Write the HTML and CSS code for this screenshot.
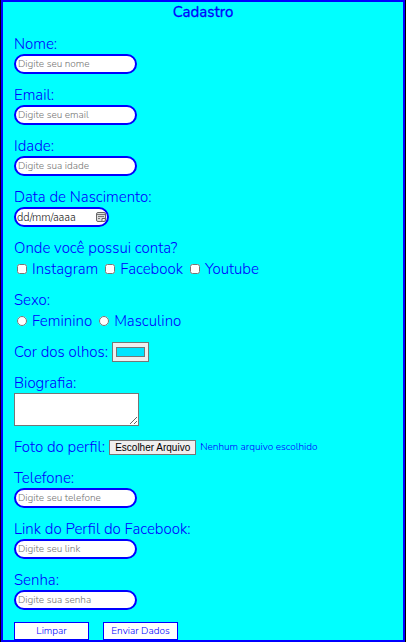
FILE: index.html
```
<!DOCTYPE html>
<html lang="pt-BR">
<head>
<meta charset="utf-8">
<meta name="viewport" content="width=device-width, initial-scale=1">
<title>Cadastro</title>
<link rel="stylesheet" href="styles.css">
</head>
<body>
<main class="panel">
  <h1 class="title">Cadastro</h1>
  <form class="form">
    <div class="field">
      <label for="nome">Nome:</label>
      <input class="text" id="nome" type="text" placeholder="Digite seu nome">
    </div>
    <div class="field">
      <label for="email">Email:</label>
      <input class="text" id="email" type="email" placeholder="Digite seu email">
    </div>
    <div class="field">
      <label for="idade">Idade:</label>
      <input class="text" id="idade" type="text" inputmode="numeric" placeholder="Digite sua idade">
    </div>
    <div class="field">
      <label for="nascimento">Data de Nascimento:</label>
      <div class="text date">
        <input class="date-input" id="nascimento" type="text" placeholder="dd/mm/aaaa">
        <svg class="calendar" viewBox="0 0 10 10" aria-hidden="true">
          <rect x="0.5" y="0.5" width="9" height="9" rx="1.5" fill="#ddd" stroke="#666"/>
          <path d="M1 2.500h8M2 4.500h6M2 6.500h2" fill="none" stroke="#777"/>
          <path d="M6 9.500V6.500h3.500" fill="#fff" stroke="#666"/>
        </svg>
      </div>
    </div>
    <fieldset class="field">
      <legend>Onde você possui conta?</legend>
      <div class="choices">
        <label class="choice"><input type="checkbox" name="conta">Instagram</label>
        <label class="choice"><input type="checkbox" name="conta">Facebook</label>
        <label class="choice"><input type="checkbox" name="conta">Youtube</label>
      </div>
    </fieldset>
    <fieldset class="field">
      <legend>Sexo:</legend>
      <div class="choices">
        <label class="choice"><input type="radio" name="sexo">Feminino</label>
        <label class="choice"><input type="radio" name="sexo">Masculino</label>
      </div>
    </fieldset>
    <div class="inline">
      <label for="olhos">Cor dos olhos:</label>
      <input class="color" id="olhos" type="color" value="#00e5ff">
    </div>
    <div class="field">
      <label for="biografia">Biografia:</label>
      <textarea class="bio" id="biografia"></textarea>
    </div>
    <div class="inline">
      <span>Foto do perfil:</span>
      <input class="file-input" id="foto" type="file">
      <label class="file-button" for="foto">Escolher Arquivo</label>
      <span class="file-name">Nenhum arquivo escolhido</span>
    </div>
    <div class="field">
      <label for="telefone">Telefone:</label>
      <input class="text" id="telefone" type="tel" placeholder="Digite seu telefone">
    </div>
    <div class="field">
      <label for="link">Link do Perfil do Facebook:</label>
      <input class="text" id="link" type="url" placeholder="Digite seu link">
    </div>
    <div class="field">
      <label for="senha">Senha:</label>
      <input class="text" id="senha" type="password" placeholder="Digite sua senha">
    </div>
    <div class="actions">
      <button class="button" type="reset">Limpar</button>
      <button class="button" type="submit">Enviar Dados</button>
    </div>
  </form>
</main>
</body>
</html>
```
FILE: styles.css
```
* { box-sizing: border-box; }

body {
  margin: 0;
  padding: 0 1px;
  background: #000;
  color: #00f;
  font: 300 15px/20px Nunito, Lato, sans-serif;
}

input, textarea, button { font-family: inherit; font-weight: inherit; margin: 0; }

.panel {
  border: 2px solid #00f;
  background: #0ff;
}

.title {
  margin: 0 0 12px;
  text-align: center;
  font-size: 15px;
  line-height: 20px;
  font-weight: 400;
  -webkit-text-stroke: 0.3px #00f;
}

.form {
  display: flex;
  flex-direction: column;
  gap: 11px;
  padding: 0 11px;
}

.field {
  display: flex;
  flex-direction: column;
  align-items: flex-start;
  margin: 0;
  padding: 0;
  border: 0;
}

legend { padding: 0; line-height: 21px; }

.text {
  width: 123px;
  height: 20px;
  padding: 0 2px;
  border: 2px solid #00f;
  border-radius: 10px;
  background: #fff;
  color: #555;
  font-size: 10px;
}

::placeholder { color: #757575; opacity: 1; }

.date {
  display: flex;
  align-items: center;
  width: 95px;
  padding: 0 1px;
}

.date-input {
  flex: 1;
  min-width: 0;
  padding: 0;
  border: 0;
  background: none;
  font-size: 11px;
}

.date-input::placeholder { color: #222; }

.calendar { width: 10px; height: 10px; }

.choices {
  display: flex;
  gap: 7px;
  padding-left: 3px;
}

.choice { display: flex; align-items: center; gap: 5px; }

.choice input { width: 10px; height: 10px; }

.inline { display: flex; align-items: center; gap: 4px; }

.color {
  appearance: none;
  width: 37px;
  height: 20px;
  padding: 3px 2px;
  border: 1px solid #767676;
  background: #efefef;
}

.color::-webkit-color-swatch-wrapper { padding: 1px; }
.color::-webkit-color-swatch { border: 1px solid #777; }

.bio {
  width: 125px;
  height: 33px;
  border: 1px solid #767676;
  background: #fff;
}

.file-input {
  position: absolute;
  width: 1px;
  height: 1px;
  opacity: 0;
}

.file-button {
  padding: 0 5px;
  border: 1px solid #767676;
  background: #efefef;
  color: #000;
  font: 400 10px/13px "Liberation Sans", Arial, sans-serif;
}

.file-name { font-size: 10px; }

.actions { display: flex; gap: 14px; padding-top: 1px; }

.button {
  width: 75px;
  height: 18px;
  padding: 0;
  border: 1px solid #00f;
  background: #fff;
  color: #00f;
  font-size: 10px;
}
```
